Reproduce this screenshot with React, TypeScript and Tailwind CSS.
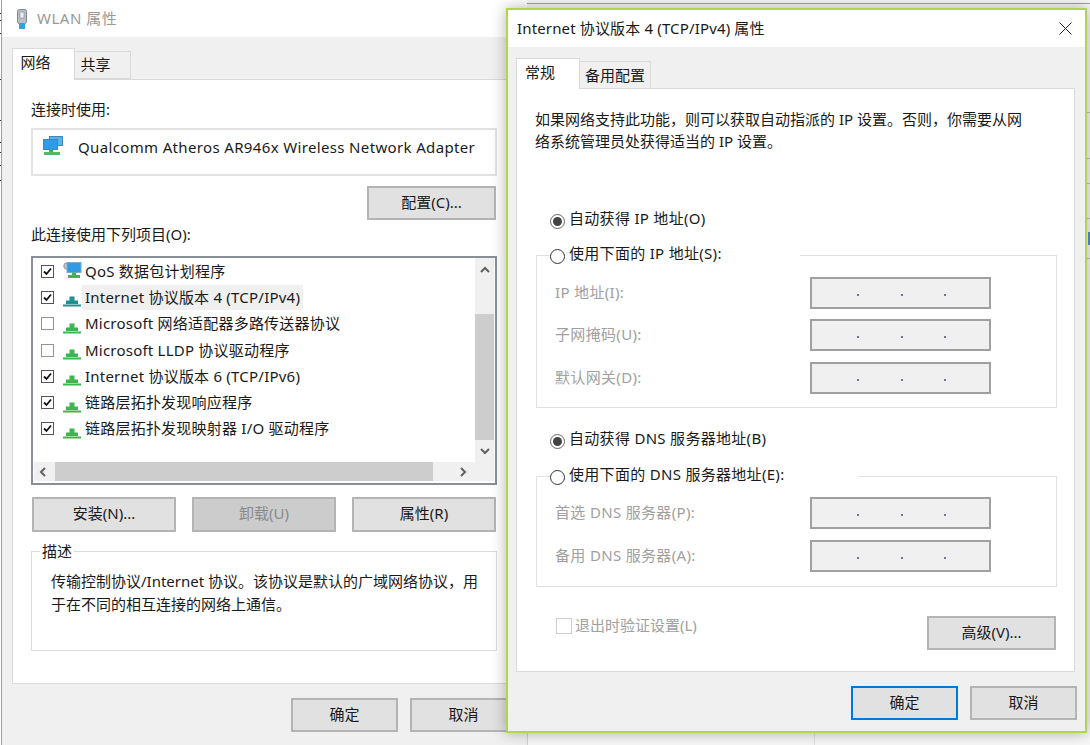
import type { ReactNode } from "react"

const font = "font-['Noto_Sans','Noto_Sans_CJK_SC',sans-serif]"

function Btn({ className = "", children }: { className?: string; children: ReactNode }) {
  return (
    <div className={`h-[34px] pb-[2px] flex items-center justify-center border-2 border-[#b4b4b4] bg-[#e1e1e1] text-[#1a1a1a] ${className}`}>
      {children}
    </div>
  )
}

function Chevron({ dir }: { dir: "up" | "down" | "left" | "right" }) {
  const pts = {
    up: "2,8 6,4 10,8",
    down: "2,4 6,8 10,4",
    left: "8,2 4,6 8,10",
    right: "4,2 8,6 4,10",
  }[dir]
  return (
    <svg width="12" height="12" viewBox="0 0 12 12" className="shrink-0">
      <polyline points={pts} fill="none" stroke="#606060" strokeWidth="2" />
    </svg>
  )
}

function Check({ checked }: { checked: boolean }) {
  return (
    <div className={`w-[13px] h-[13px] shrink-0 border bg-white ${checked ? "border-[#555]" : "border-[#949494]"}`}>
      {checked && (
        <svg width="11" height="11" viewBox="0 0 11 11">
          <polyline points="2,5.5 4.5,8 9,2.5" fill="none" stroke="#111" strokeWidth="1.8" />
        </svg>
      )}
    </div>
  )
}

function NetBase({ color = "#3fb54f" }: { color?: string }) {
  return (
    <svg width="19" height="20" viewBox="0 0 19 20" className="shrink-0">
      <path d="M6.5 9.5h5v4h3.5v3.5H3v-3.5h3.5z" fill={color} />
      <rect x="0" y="17.5" width="18" height="2" fill={color} />
    </svg>
  )
}

function QosIcon() {
  return (
    <svg width="19" height="18" viewBox="0 0 19 18" className="shrink-0">
      <circle cx="4" cy="4" r="3.2" fill="#c4c8cc" stroke="#8d9298" strokeWidth="1" />
      <rect x="4" y="0.5" width="14" height="10" fill="#2f9ae6" stroke="#7fa9c8" strokeWidth="1" />
      <rect x="9" y="10.5" width="4" height="3" fill="#3fb54f" />
      <rect x="5" y="13" width="12" height="3" fill="#3fb54f" />
    </svg>
  )
}

function AdapterIcon() {
  return (
    <svg width="20" height="20" viewBox="0 0 20 20">
      <rect x="6.5" y="0.5" width="13" height="9" fill="#58b4ea" stroke="#3d87ba" />
      <rect x="0.5" y="3.5" width="14" height="10" fill="#2e9ce8" stroke="#3d87ba" />
      <rect x="6" y="13.5" width="4" height="3" fill="#3fb54f" />
      <rect x="1" y="16" width="16" height="3" fill="#55b860" />
    </svg>
  )
}

function UsbIcon() {
  return (
    <svg width="10" height="20" viewBox="0 0 10 20">
      <rect x="0.5" y="0.5" width="9" height="14" rx="2" fill="#b9c0c8" stroke="#7b8791" />
      <rect x="3" y="3" width="4" height="6" fill="#eef1f4" stroke="#7b8791" strokeWidth="0.6" />
      <rect x="2" y="15" width="6" height="5" fill="#2fa3e0" />
    </svg>
  )
}

function Radio({ on = false }: { on?: boolean }) {
  return (
    <div className={`w-[15px] h-[15px] shrink-0 rounded-full border bg-white flex items-center justify-center ${on ? "border-[#666]" : "border-[#333]"}`}>
      {on && <div className="w-[9px] h-[9px] rounded-full bg-[#444]" />}
    </div>
  )
}

function IpField() {
  return (
    <div className="w-[181px] h-[32px] pt-[4px] border-2 border-[#a0a0a0] bg-[#f0f0f0] flex items-center">
      <div className="flex ml-[45px] gap-[41.5px]">
        <div className="w-[2px] h-[2px] bg-[#6a7a90]" />
        <div className="w-[2px] h-[2px] bg-[#6a7a90]" />
        <div className="w-[2px] h-[2px] bg-[#6a7a90]" />
      </div>
    </div>
  )
}

function IpRow({ label, className = "" }: { label: string; className?: string }) {
  return (
    <div className={`flex items-center ${className}`}>
      <div className="w-[273px] pl-[18px] pb-[2px] text-[#a0a0a0] tracking-[0.33px]">{label}</div>
      <IpField />
    </div>
  )
}

const items = [
  { text: "QoS 数据包计划程序", on: true, icon: <QosIcon /> },
  { text: "Internet 协议版本 4 (TCP/IPv4)", on: true, icon: <NetBase color="#22908f" />, active: true },
  { text: "Microsoft 网络适配器多路传送器协议", on: false, icon: <NetBase /> },
  { text: "Microsoft LLDP 协议驱动程序", on: false, icon: <NetBase /> },
  { text: "Internet 协议版本 6 (TCP/IPv6)", on: true, icon: <NetBase /> },
  { text: "链路层拓扑发现响应程序", on: true, icon: <NetBase /> },
  { text: "链路层拓扑发现映射器 I/O 驱动程序", on: true, icon: <NetBase /> },
]

function WlanWindow() {
  return (
    <div className="absolute left-[1px] top-0 w-[526px] h-[745px] border-l border-[#a0a0a0] bg-[#f0f0f0] flex flex-col">
      <div className="h-[37px] shrink-0 bg-white flex items-center pl-[15px] gap-[10px] text-[#999]">
        <UsbIcon />
        <span className="tracking-[0.5px]">WLAN 属性</span>
      </div>
      <div className="flex ml-[10px] mt-[11px] -mb-px relative z-10">
        <div className="w-[63px] h-[32px] bg-white border border-b-0 border-[#d9d9d9] flex items-center justify-center text-[#1a1a1a] pb-[5px] pr-[16px]">网络</div>
        <div className="w-[56px] h-[28px] mt-[3px] border border-l-0 border-[#d9d9d9] flex items-center justify-center text-[#1a1a1a] pr-[14px] pb-[2px]">共享</div>
      </div>
      <div className="ml-[10px] w-[505px] h-[605px] shrink-0 bg-white border border-[#d9d9d9] pl-[18px] flex flex-col">
        <div className="w-[466px] flex flex-col">
          <div className="mt-[19px] h-[20px] leading-[20px] text-[#1a1a1a]">连接时使用:</div>
          <div className="mt-[9px] h-[48px] border-2 border-[#e2e2e2] flex items-center pl-[10px] pb-[10px]">
            <div className="-mt-[2px]"><AdapterIcon /></div>
            <span className="ml-[15px] text-[#1a1a1a] tracking-[0.35px]">Qualcomm Atheros AR946x Wireless Network Adapter</span>
          </div>
          <Btn className="mt-[10px] w-[129px] self-end mr-[1px]">配置(C)...</Btn>
          <div className="mt-[4px] h-[20px] leading-[20px] text-[#1a1a1a]">此连接使用下列项目(O):</div>

          <div className="mt-[12px] h-[229px] border-2 border-[#8a8f96] flex flex-col">
            <div className="flex flex-1 min-h-0">
              <div className="flex-1 min-w-0">
                {items.map((it) => (
                  <div key={it.text} className="h-[26.3px] flex items-center pl-[8px] text-[#1a1a1a]">
                    <Check checked={it.on} />
                    <div className="ml-[9px]">{it.icon}</div>
                    <span className={`h-[25px] leading-[24px] px-[3px] whitespace-nowrap tracking-[0.22px] ${it.active ? "bg-[#f0f0f0]" : ""}`}>{it.text}</span>
                  </div>
                ))}
              </div>
              <div className="w-[19px] mr-[1px] bg-[#f0f0f0] flex flex-col items-center">
                <div className="mt-[6px]"><Chevron dir="up" /></div>
                <div className="mt-[38px] w-full h-[126px] bg-[#cdcdcd]" />
                <div className="mt-[5px]"><Chevron dir="down" /></div>
              </div>
            </div>
            <div className="h-[19px] ml-[1px] mr-[1px] mb-[2px] bg-[#f0f0f0] flex items-center">
              <div className="ml-[3px]"><Chevron dir="left" /></div>
              <div className="ml-[6px] w-[378px] h-full bg-[#cdcdcd]" />
              <div className="ml-[24px]"><Chevron dir="right" /></div>
            </div>
          </div>

          <div className="mt-[12px] px-[1px] flex gap-[16px]">
            <Btn className="w-[144px] h-[35px]">安装(N)...</Btn>
            <Btn className="w-[144px] h-[35px] !bg-[#cccccc] !text-[#8a8a8a]">卸载(U)</Btn>
            <Btn className="w-[144px] h-[35px]">属性(R)</Btn>
          </div>

          <div className="relative mt-[19px] h-[100px] border border-[#dcdcdc] pl-[19px] pt-[18px] text-[#1a1a1a] leading-[23px]">
            <div className="absolute left-[8px] -top-[11px] h-[20px] leading-[20px] bg-white px-[2px]">描述</div>
            <div>传输控制协议/Internet 协议。该协议是默认的广域网络协议，用</div>
            <div>于在不同的相互连接的网络上通信。</div>
          </div>
        </div>
      </div>
      <div className="mt-[14px] pr-[10px] flex justify-end gap-[12px]">
        <Btn className="w-[107px]">确定</Btn>
        <Btn className="w-[107px]">取消</Btn>
      </div>
    </div>
  )
}

function Ipv4Window() {
  return (
    <div className="absolute left-[506px] top-[8px] w-[581px] h-[725px] border-2 border-[#b0d64a] bg-[#f0f0f0] flex flex-col shadow-[0_0_14px_rgba(0,0,0,0.3)]">
      <div className="h-[37px] shrink-0 bg-white flex items-center justify-between pl-[9px] pr-[13px] text-[#1a1a1a]">
        <span className="tracking-[0.15px]">Internet 协议版本 4 (TCP/IPv4) 属性</span>
        <svg width="13" height="13" viewBox="0 0 13 13">
          <path d="M0.5 0.5l12 12M12.5 0.5l-12 12" stroke="#222" strokeWidth="1" fill="none" />
        </svg>
      </div>
      <div className="flex ml-[8px] mt-[11px] -mb-px relative z-10">
        <div className="w-[64px] h-[31px] bg-white border border-b-0 border-[#d9d9d9] flex items-center justify-center text-[#1a1a1a] pb-[4px] pr-[16px]">常规</div>
        <div className="w-[71px] h-[28px] mt-[3px] border border-l-0 border-[#d9d9d9] flex items-center justify-center text-[#1a1a1a]">备用配置</div>
      </div>
      <div className="ml-[8px] w-[559px] h-[584px] shrink-0 bg-white border border-[#d9d9d9] pl-[19px] flex flex-col">
        <div className="w-[521px] flex flex-col text-[#1a1a1a]">
          <div className="mt-[19px] leading-[22px] -ml-[1px]">
            <div>如果网络支持此功能，则可以获取自动指派的 IP 设置。否则，你需要从网</div>
            <div>络系统管理员处获得适当的 IP 设置。</div>
          </div>

          <div className="mt-[58px] h-[20px] pl-[14px] flex items-center gap-[4px]">
            <div className="mt-[2px]"><Radio on /></div>
            <span className="tracking-[0.3px] -mt-[4px]">自动获得 IP 地址(O)</span>
          </div>

          <div className="relative mt-[25px] h-[153px] border border-[#e0e0e0] pt-[21px]">
            <div className="absolute left-[13px] -top-[11px] w-[250px] h-[20px] bg-white flex items-center gap-[4px]">
              <div className="mt-[2px]"><Radio /></div>
              <span className="tracking-[0.3px] -mt-[4px]">使用下面的 IP 地址(S):</span>
            </div>
            <IpRow label="IP 地址(I):" />
            <IpRow label="子网掩码(U):" className="mt-[10px]" />
            <IpRow label="默认网关(D):" className="mt-[11px]" />
          </div>

          <div className="mt-[22px] h-[20px] pl-[14px] flex items-center gap-[4px]">
            <div className="mt-[2px]"><Radio on /></div>
            <span className="tracking-[0.3px] -mt-[4px]">自动获得 DNS 服务器地址(B)</span>
          </div>

          <div className="relative mt-[26px] h-[111px] border border-[#e0e0e0] pt-[20px]">
            <div className="absolute left-[13px] -top-[11px] w-[308px] h-[20px] bg-white flex items-center gap-[4px]">
              <div className="mt-[2px]"><Radio /></div>
              <span className="tracking-[0.3px] -mt-[4px]">使用下面的 DNS 服务器地址(E):</span>
            </div>
            <IpRow label="首选 DNS 服务器(P):" />
            <IpRow label="备用 DNS 服务器(A):" className="mt-[11px]" />
          </div>

          <div className="mt-[29px] pl-[20px] pr-[1px] flex items-center justify-between">
            <div className="flex items-center gap-[3px] text-[#a0a0a0]">
              <div className="w-[16px] h-[16px] border border-[#cfcfcf] bg-white -mt-[14px]" />
              <span className="-mt-[16px]">退出时验证设置(L)</span>
            </div>
            <Btn className="w-[129px]">高级(V)...</Btn>
          </div>
        </div>
      </div>
      <div className="mt-[14px] pr-[8px] flex justify-end gap-[12px]">
        <Btn className="w-[107px] !border-[#0078d7]">确定</Btn>
        <Btn className="w-[107px]">取消</Btn>
      </div>
    </div>
  )
}

const rightLines = [112, 158, 183, 218, 258]
const leftMarks = [13, 20, 33, 79, 120, 142, 152, 165, 180]

export default function App() {
  return (
    <div className={`relative w-[1090px] h-[745px] overflow-hidden bg-[#f7f7f7] text-[15px] ${font}`}>
      {/* window behind, only slivers show */}
      <div className="absolute left-[527px] top-[3px] right-0 h-px bg-[#a0a0a0]" />
      <div className="absolute left-[527px] top-[733px] bottom-0 w-px bg-[#d0d0d0]" />
      <div className="absolute left-[814px] top-[733px] bottom-0 w-px bg-[#e0e0e0]" />
      <div className="absolute left-0 top-0 w-[1px] h-[745px] bg-white" />
      {leftMarks.map((y) => (
        <div key={y} className="absolute left-0 w-[1px] h-[1px] bg-[#333]" style={{ top: y }} />
      ))}
      {rightLines.map((y) => (
        <div key={y} className="absolute left-[1087px] right-0 h-px bg-[#c0c0c0]" style={{ top: y }} />
      ))}
      <div className="absolute left-[1088px] top-[232px] w-[2px] h-[13px] bg-[#5b8fc7]" />

      <WlanWindow />
      <Ipv4Window />
    </div>
  )
}
